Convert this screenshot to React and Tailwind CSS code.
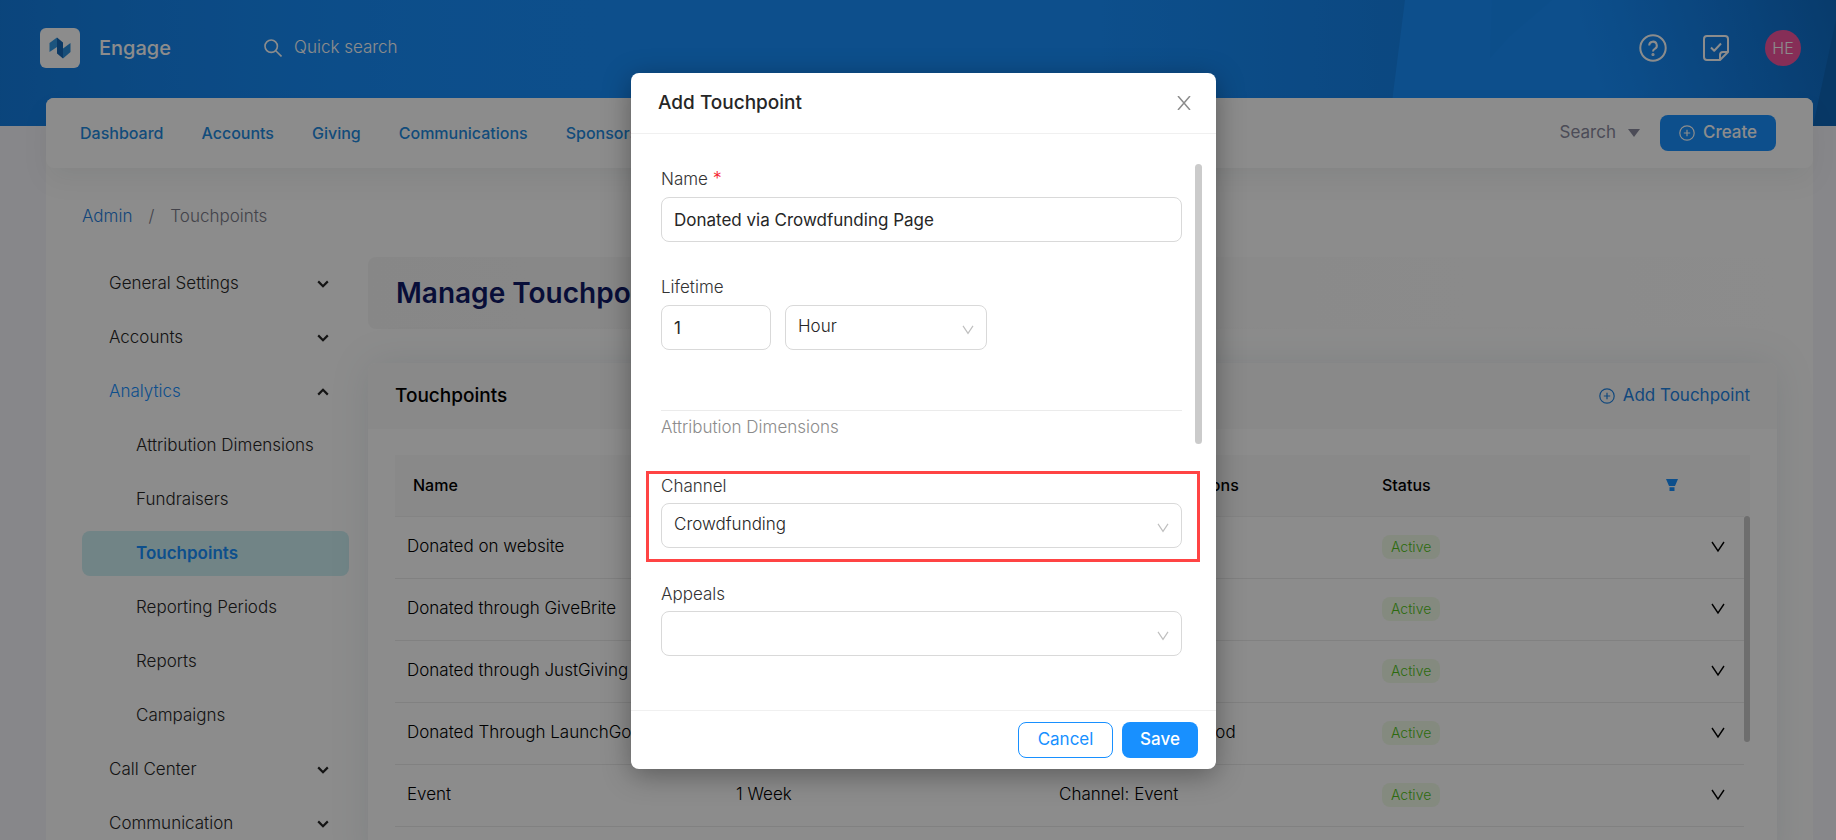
const NAV = ["Dashboard", "Accounts", "Giving", "Communications", "Sponsorship"];

const MENU = [
  { label: "General Settings", chevron: "down" },
  { label: "Accounts", chevron: "down" },
  { label: "Analytics", chevron: "up", open: true },
  { label: "Attribution Dimensions", child: true },
  { label: "Fundraisers", child: true },
  { label: "Touchpoints", child: true, active: true },
  { label: "Reporting Periods", child: true },
  { label: "Reports", child: true },
  { label: "Campaigns", child: true },
  { label: "Call Center", chevron: "down" },
  { label: "Communication", chevron: "down" },
];

const ROWS = [
  { name: "Donated on website", lifetime: "1 Hour", dims: "Channel: Website" },
  { name: "Donated through GiveBrite", lifetime: "1 Hour", dims: "Channel: Events" },
  { name: "Donated through JustGiving", lifetime: "1 Hour", dims: "Channel: Giving" },
  { name: "Donated Through LaunchGood", lifetime: "1 Hour", dims: "Channel: LaunchGood" },
  { name: "Event", lifetime: "1 Week", dims: "Channel: Event" },
];

function PlusCircle({ className }) {
  return (
    <svg viewBox="0 0 16 16" className={className} fill="none" stroke="currentColor" strokeWidth="1.2" aria-hidden="true">
      <circle cx="8" cy="8" r="7.2" />
      <path d="M8 4.8v6.4M4.8 8h6.4" />
    </svg>
  );
}

function ThinChevron({ className }) {
  return (
    <svg viewBox="0 0 14 12" className={className} fill="none" stroke="currentColor" strokeWidth="1.4" aria-hidden="true">
      <path d="M1 1l6 9 6-9" />
    </svg>
  );
}

function MenuChevron({ up }) {
  return (
    <svg viewBox="0 0 12 8" className="h-2 w-3" fill="none" stroke="currentColor" strokeWidth="2.2" aria-hidden="true">
      <path d={up ? "M1.2 6.6L6 1.8l4.8 4.8" : "M1.2 1.4L6 6.2l4.8-4.8"} />
    </svg>
  );
}

function Header() {
  return (
    <header className="relative h-[126px] bg-[#1890ff]">
      <svg className="absolute inset-0 h-full w-full" viewBox="0 0 1836 126" preserveAspectRatio="none" aria-hidden="true">
        <defs>
          <linearGradient id="left" x1="0" x2="1">
            <stop offset="0" stopColor="#0b5cab" stopOpacity=".35" />
            <stop offset="1" stopColor="#1890ff" stopOpacity="0" />
          </linearGradient>
          <linearGradient id="mid" x1="0" x2="1">
            <stop offset="0" stopColor="#1583ea" stopOpacity="0" />
            <stop offset="1" stopColor="#1583ea" />
          </linearGradient>
          <linearGradient id="right" x1="0" x2="1" y1="0.15" y2="0">
            <stop offset="0" stopColor="#0f6fd0" stopOpacity="0" />
            <stop offset="1" stopColor="#0f6cc4" />
          </linearGradient>
        </defs>
        <rect width="1836" height="126" fill="#1890ff" />
        <path d="M0 0h620v126H0z" fill="url(#left)" />
        <path d="M1100 0h305l-16 126h-289z" fill="url(#mid)" />
        <path d="M1492 0h60l-42 36-20 22z" fill="#178ffc" />
        <path d="M1580 0h256v126h-256z" fill="url(#right)" />
        <path d="M1836 20v106h-23z" fill="#0e66ba" />
      </svg>
      <div className="relative flex h-[95px] items-center pr-[35px] pl-10">
        <div className="flex size-10 items-center justify-center rounded-md bg-white">
          <svg viewBox="0 0 22 22" className="size-[22px]" aria-hidden="true">
            <path d="M0.5 6L8 0.5v9.5L0.5 15z" fill="#3399e6" />
            <path d="M8 0.5l6 5v16l-6-5z" fill="#1468b8" />
            <path d="M14 11.500L21.500 6v9L14 21.500z" fill="#2a8fdc" />
          </svg>
        </div>
        <span className="ml-[19px] w-[165px] text-xl font-medium text-white">Engage</span>
        <button className="flex items-center gap-3 text-white">
          <svg viewBox="0 0 18 18" className="size-[18px]" fill="none" stroke="currentColor" strokeWidth="1.600" aria-hidden="true">
            <circle cx="7.200" cy="7.200" r="6.200" />
            <path d="M11.800 11.800l5.700 5.700" />
          </svg>
          <span className="text-[17px] font-light">Quick search</span>
        </button>
        <div className="ml-auto flex items-center gap-9 text-white">
          <button aria-label="Help">
            <svg viewBox="0 0 28 28" className="size-7" fill="none" stroke="currentColor" strokeWidth="2" aria-hidden="true">
              <circle cx="14" cy="14" r="12.700" />
              <path d="M10.200 11.500a3.800 3.800 0 1 1 5.600 3.300c-1.200.7-1.800 1.300-1.800 2.700" />
              <circle cx="14" cy="20.500" r=".6" fill="currentColor" />
            </svg>
          </button>
          <button aria-label="Tasks">
            <svg viewBox="0 0 26 26" className="size-[26px]" fill="none" stroke="currentColor" strokeWidth="2" strokeLinejoin="round" aria-hidden="true">
              <path d="M4 1h18a3 3 0 0 1 3 3v13l-8 8H4a3 3 0 0 1-3-3V4a3 3 0 0 1 3-3z" />
              <path d="M25 17h-5a3 3 0 0 0-3 3v5M8 12.500l3.200 3.200L18 8.500" />
            </svg>
          </button>
          <button className="size-9 rounded-full bg-[#f5559f] text-base font-light">HE</button>
        </div>
      </div>
    </header>
  );
}

function NavBar() {
  return (
    <nav className="relative flex h-[70px] items-center rounded-lg bg-white pr-[37px] pl-[34px] shadow-[0_12px_28px_rgba(0,40,40,0.06)]">
      <ul className="flex gap-[38px] text-base font-medium text-[#1f8ae0]">
        {NAV.map((n) => (
          <li key={n}>
            <a href="#">{n}</a>
          </li>
        ))}
      </ul>
      <button className="ml-auto flex items-center gap-3 text-[17px] text-[#8a8a9e]">
        Search
        <svg viewBox="0 0 12 8" className="h-2 w-3" aria-hidden="true">
          <path d="M0 0h12L6 8z" fill="currentColor" />
        </svg>
      </button>
      <button className="ml-5 flex h-9 w-[116px] items-center justify-center gap-2 rounded-lg bg-[#1890ff] text-[17px] font-medium text-white">
        <PlusCircle className="size-4" />
        Create
      </button>
    </nav>
  );
}

function Sidebar() {
  return (
    <aside className="w-[267px] shrink-0">
      <ul className="flex flex-col gap-[9px] pt-1 text-[17px] font-light text-[#262626]">
        {MENU.map((m) => (
          <li key={m.label + (m.child ? "-child" : "")}>
            <a
              href="#"
              className={
                "flex h-[45px] items-center justify-between rounded-lg pr-5 " +
                (m.child ? "pl-[54px] " : "pl-[27px] ") +
                (m.active ? "bg-[#cef0f4] font-semibold text-[#1890ff]" : "")
              }
            >
              <span className={m.open ? "text-[#1890ff]" : ""}>{m.label}</span>
              {m.chevron && <MenuChevron up={m.chevron === "up"} />}
            </a>
          </li>
        ))}
      </ul>
    </aside>
  );
}

function TouchpointTable() {
  return (
    <div className="relative">
      <table className="w-full table-fixed text-left text-base">
        <colgroup>
          <col className="w-[329px]" />
          <col className="w-[323px]" />
          <col className="w-[323px]" />
          <col />
          <col className="w-[65px]" />
        </colgroup>
        <thead className="bg-[#fafafa]">
          <tr className="h-[61px] border-b border-[#f0f0f0] font-medium">
            <th className="pl-[18px] font-medium">Name</th>
            <th className="pl-[18px] font-medium">Lifetime</th>
            <th className="pl-[18px] font-medium">Attribution Dimensions</th>
            <th className="pl-3 font-medium">
              <span className="flex items-center justify-between pr-[7px]">
                Status
                <svg viewBox="0 0 12 12" className="size-3 text-[#1890ff]" fill="currentColor" aria-hidden="true">
                  <path d="M0 0h12L9 7H3zM3.500 8.200h5V12h-5z" />
                </svg>
              </span>
            </th>
            <th aria-label="Expand" />
          </tr>
        </thead>
        <tbody className="text-[17px] font-light">
          {ROWS.map((r) => (
            <tr key={r.name} className="h-[62px]">
              <td className="border-b border-[#ebebeb] pl-3">{r.name}</td>
              <td className="border-b border-[#ebebeb] pl-3">{r.lifetime}</td>
              <td className="border-b border-[#ebebeb] pl-3">{r.dims}</td>
              <td className="border-b border-[#ebebeb] pl-3">
                <span className="block w-fit rounded-lg bg-[#f1fbe8] px-[9px] text-sm leading-6 text-[#52c41a]">Active</span>
              </td>
              <td className="border-b border-[#ebebeb]">
                <button aria-label="Expand row" className="ml-[26px] block">
                  <ThinChevron className="h-3 w-[14px]" />
                </button>
              </td>
            </tr>
          ))}
        </tbody>
      </table>
      <div className="absolute top-[61px] right-0 bottom-0 w-[6px] bg-white">
        <div className="h-[226px] rounded-full bg-[#c9c9c9]" />
      </div>
    </div>
  );
}

const fieldClass = "h-[45px] w-full rounded-lg border border-[#d9d9d9] bg-white px-3 text-[17px] text-[#262626]";

function SelectField({ id, label, options, className }) {
  return (
    <div className={"relative " + className}>
      <select id={id} aria-label={label} className={fieldClass + " appearance-none pb-[2px] font-light"}>
        {options.map((o) => (
          <option key={o}>{o}</option>
        ))}
      </select>
      <ThinChevron className="pointer-events-none absolute top-5 right-[13px] h-[10px] w-3 text-[#bfbfbf]" />
    </div>
  );
}

function Modal() {
  const label = "block text-[17px] leading-6 font-light text-[#333]";
  return (
    <div role="dialog" aria-label="Add Touchpoint" className="w-[585px] rounded-lg bg-white text-[#262626] shadow-[0_6px_28px_rgba(0,0,0,0.35)]">
      <div className="flex h-[61px] items-center justify-between border-b border-[#f0f0f0] pr-[25px] pl-[27px]">
        <h2 className="text-[19px] font-medium">Add Touchpoint</h2>
        <button aria-label="Close" className="text-[#8c8c8c]">
          <svg viewBox="0 0 14 14" className="size-[14px]" fill="none" stroke="currentColor" strokeWidth="1.500" aria-hidden="true">
            <path d="M1 0l12 14M13 0L1 14" />
          </svg>
        </button>
      </div>
      <div className="flex pt-[30px]">
        <div className="min-w-0 flex-1 pb-[54px] pl-[30px]">
          <label htmlFor="name" className={label + " mt-[3px]"}>
            Name <span className="text-lg leading-4 text-[#f5222d]">*</span>
          </label>
          <input id="name" className={fieldClass + " mt-[6px]"} defaultValue="Donated via Crowdfunding Page" />
          <label htmlFor="life" className={label + " mt-[33px]"}>Lifetime</label>
          <div className="mt-[6px] flex gap-[14px]">
            <div className="w-[110px]">
              <input id="life" className={fieldClass} defaultValue="1" />
            </div>
            <SelectField id="unit" label="Lifetime unit" options={["Hour", "Day", "Week"]} className="w-[202px]" />
          </div>
          <div className="mt-[60px] border-t border-[#ebebeb] pt-1 text-[17px] leading-6 font-light text-[#8c8c8c]">
            Attribution Dimensions
          </div>
          <div className="-mr-[18px] mt-8 -ml-[15px] border-[3px] border-[#ff4444] pr-[15px] pb-[11px] pl-3">
            <label htmlFor="channel" className={label}>Channel</label>
            <SelectField id="channel" label="Channel" options={["Crowdfunding"]} className="mt-[5px]" />
          </div>
          <label htmlFor="appeals" className={label + " mt-5"}>Appeals</label>
          <SelectField id="appeals" label="Appeals" options={[""]} className="mt-[5px]" />
        </div>
        <div className="mr-[14px] ml-[13px] h-[280px] w-[7px] rounded-full bg-[#cbcbcb]" />
      </div>
      <div className="flex h-[59px] items-center justify-end gap-[9px] border-t border-[#f0f0f0] pr-[18px]">
        <button className="h-9 w-[95px] rounded-lg border border-[#1890ff] text-[17px] text-[#1890ff]">Cancel</button>
        <button className="h-9 w-[76px] rounded-lg bg-[#1890ff] text-[17px] font-medium text-white">Save</button>
      </div>
    </div>
  );
}

export default function App() {
  return (
    <div className="relative h-screen overflow-hidden bg-[#f6f6fb] font-['Inter','Noto_Sans',sans-serif] text-black">
      <Header />
      <div className="relative -mt-7 mr-[23px] ml-[46px] rounded-lg bg-white">
        <NavBar />
        <main className="pr-9 pl-9">
          <div className="flex h-[89px] items-center gap-4 pt-2 text-[17px] font-light">
            <a href="#" className="text-[#1f7fe0]">Admin</a>
            <span className="text-[#7a7a88]">/</span>
            <span className="text-[#7a7a88]">Touchpoints</span>
          </div>
          <div className="flex gap-[19px]">
            <Sidebar />
            <section className="min-w-0 flex-1">
              <div className="flex h-[72px] items-center rounded-lg bg-linear-to-r from-[#f6f6f6] to-white pl-7">
                <h1 className="text-[28px] font-semibold text-[#101a66]">Manage Touchpoints</h1>
              </div>
              <div className="mt-[34px] rounded-lg bg-white shadow-[0_0_40px_rgba(60,90,110,0.12)]">
                <div className="flex h-[66px] items-center justify-between rounded-t-lg bg-[#fafafa] px-[27px]">
                  <h2 className="text-[19px] font-medium">Touchpoints</h2>
                  <button className="flex items-center gap-2 text-[17px] text-[#1f84e4]">
                    <PlusCircle className="size-4" />
                    Add Touchpoint
                  </button>
                </div>
                <div className="px-[27px] pt-[26px] pb-10">
                  <TouchpointTable />
                </div>
              </div>
            </section>
          </div>
        </main>
      </div>
      <div className="absolute inset-0 flex items-start justify-center bg-black/45 pt-[73px] pl-[11px]">
        <Modal />
      </div>
    </div>
  );
}
